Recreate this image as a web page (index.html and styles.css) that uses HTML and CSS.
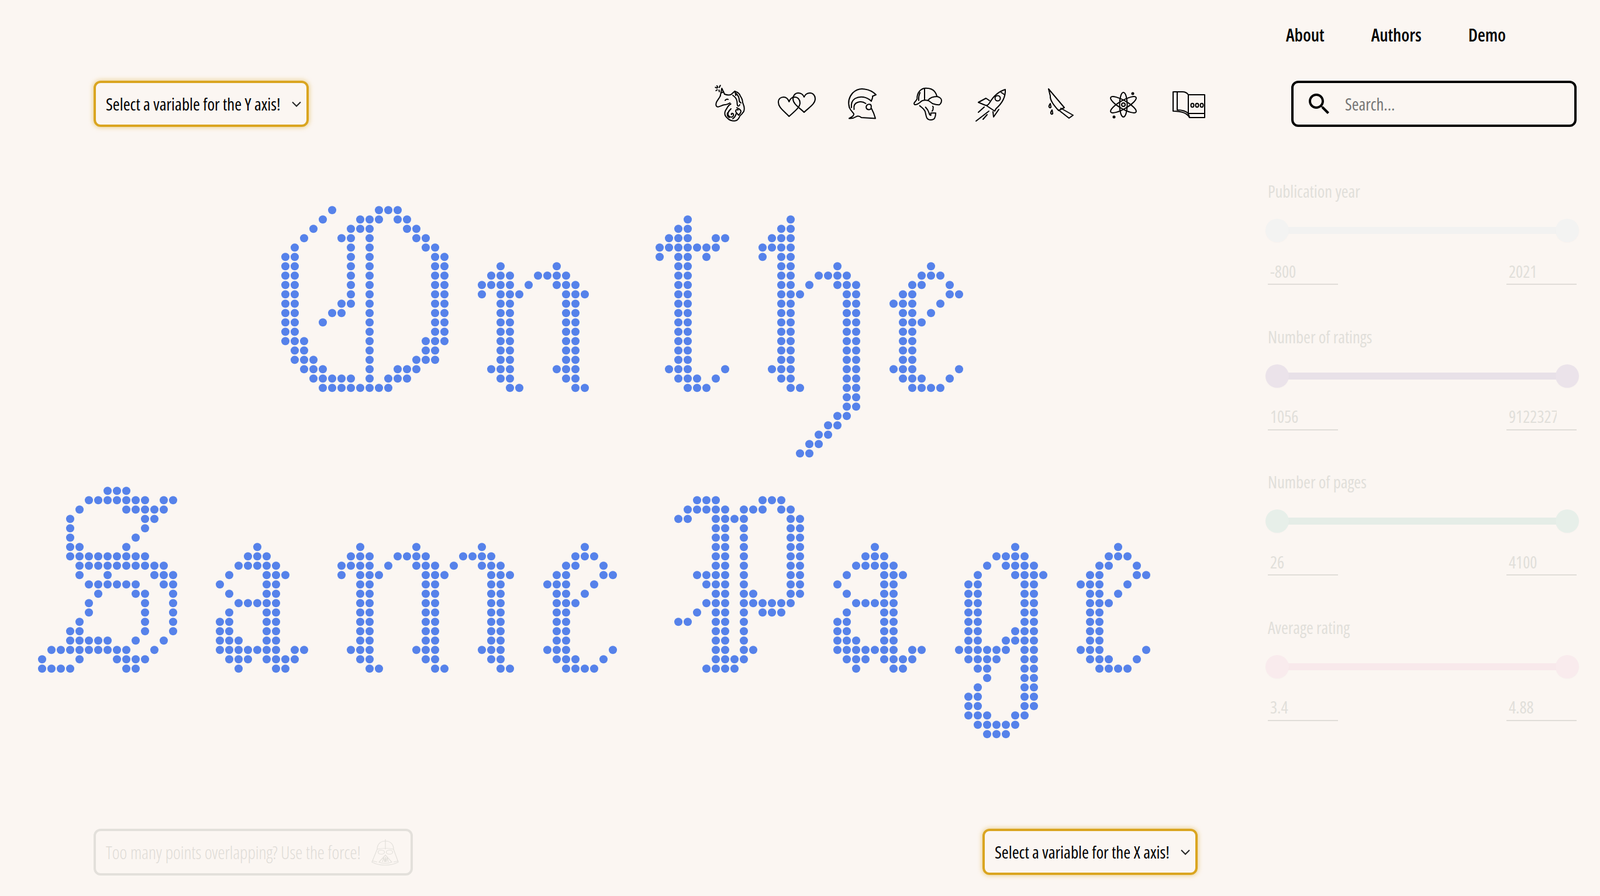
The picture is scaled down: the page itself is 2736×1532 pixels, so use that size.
FILE: index.html
```html
<!DOCTYPE html>
<html lang="en">
<head>
    <meta charset="UTF-8">
    <meta name="viewport" content="width=device-width, initial-scale=1.0">
    <title>On the Same Page</title>
    <link rel="stylesheet" href="styles.css">
</head>
<body>
    <nav class="topnav">
        <a href="#about">About</a>
        <a href="#authors">Authors</a>
        <a href="#demo">Demo</a>
    </nav>

    <div class="layout">
        <main class="main">
            <div class="toolbar">
                <div class="axis-select">
                    <select><option>Select a variable for the Y axis!</option></select>
                    <svg class="chevron" viewBox="0 0 16 10"><path d="M1 1.500l7 7 7-7"/></svg>
                </div>

                <!-- genre icons -->
                <div class="genres">
                    <!-- fantasy -->
                    <svg class="genre" viewBox="0 0 64 64">
                        <path d="M14.700 18L17.300 5 22 15M15.500 13l5-2M6.300 3.300L9 4.500M14.700 0L13 3.500M9 .7l1.500 2.800M7.300 9l2.200-1.500M13 10.700L12.500 8"/>
                        <path d="M14.700 18c-2 5-6 8-7 12-1 4 0 7 3 6.700 4-.3 7-3 10.500-3.400 4-.4 7-1 10-3.300M23 25.700c1.500-2 3.500-2.500 5-1.700M22 15c4 1.500 8 2 11 .7l6.700-6 1.600 7.600"/>
                        <path d="M40.700 10.700c4 1 7 4 8 7 2 3 4 6 4 9.600 0 4 3 6 3 12 0 5-1 6-3 8-1 3-4 3-5 6-2 5-5 7.400-9 7.400-4 0-8-1-11-4-4-3-6-7-5-11 0-3 3-5 4-8 1-2 3-4 6-6"/>
                        <path d="M36 17c3 2 6 5 7 9 1 3 0 5 1 8 1 2 3 2 4-1M42 14c3 3 5 7 5 11 0 3 1 4 3 5M43 38c2 2 6 2 7 6 0 3-2 5-4 7-2-3-5-4-5-7 0-3 3-3 4-2M33 40c-3 3-6 6-5 10 1 3 4 5 7 4 3-1 3-5 1-6-2-1-3 1-2 2M42 48c-1 4-3 7-6 9M27 47c-1 3 0 6 3 8"/>
                    </svg>
                    <!-- romance -->
                    <svg class="genre" viewBox="0 0 64 64">
                        <path d="M20.300 53C12 44 2 38 2 29c0-6 4-9 9-9 4 0 7.500 3 9.300 8 1.700-5 5.200-8 9.700-8 5 0 9 4 9 10 0 8-10 15-18.700 23z"/>
                        <path d="M46 46c-8-8-19-14-19-23 0-6 4-10 9-10 4 0 8 2 10 7 2-5 6-7 10-7 5 0 9 4 9 10 0 9-11 15-19 23z"/>
                    </svg>
                    <!-- history -->
                    <svg class="genre" viewBox="0 0 64 64">
                        <path d="M11.500 38C9 30 10 21 17 13c6-6 14-8 21-6.500 8 1 14 4.500 19 9.500l-6 2.500c1 2-1 5-2 8"/>
                        <path d="M15 38c-1-7 1-12 6-15.500 9-5 20-3 28 4.500M19.500 41c-1-6 0-10 6-12 5-2 10-1 14 2"/>
                        <path d="M11.500 38c1.500 4 5 7 7.500 10.500 1 3-4 6-8 8 5 .5 9-1 12-3 3-2 6-1 9 1.500l24 1.500c-2-7-4-12-7-17.500-2 3.500-7 3-8.500 0-1.500-4 2-8 6.500-6.500 2 1 2 4 1.500 6"/>
                    </svg>
                    <!-- mystery -->
                    <svg class="genre" viewBox="0 0 64 64">
                        <path d="M15.300 22.300C15 12 22 4.700 30.300 4.700c6 0 12 2 15 6 2 2.500 3 5 4 8.300 4 1 7.700 3.700 7.700 6.700 0 4-2.500 7.600-5 7.600-4 0-7-1-10-2-3-2-5-4-8.300-5.600-5-1-10.500 0-13.400 3.300-3 2.500-6 4.300-9 4-2-1-1.500-3 .5-5 1-1.500 2.500-3 3.500-4.700"/>
                        <path d="M28 5.700v19M20.300 12.300c-2 4-2.500 9-2.300 13.400M49.300 19c-6 0-12 2-15.600 6.700"/>
                        <path d="M19.700 34.700c3 3 7 5 9 9.300 1.500 4 1.300 8 3.300 11.700 1.500 2.500 4 3.300 6.700 3.300 3 0 5.500-1.300 6.600-3.300 1.200-2 1.700-5 1.700-8.400h-8.300v4c-1.500 0-2.500-2-3-4-1-3.500-3-7-6-10M42 35.700c2 2 0 4 .5 5 .5 1.300-1 2-1.500 3.300"/>
                    </svg>
                    <!-- science fiction -->
                    <svg class="genre" viewBox="0 0 64 64">
                        <path d="M54 7C44 10 34 18 27 30c-2 3-4 5-6 4l15 10 2-4c9-8 17-19 16-33z"/>
                        <circle cx="41" cy="22" r="4.500"/>
                        <path d="M47 12l6 4M27 26l-6-4-13 7 12 5M43 41l-9 13-1-9M4 61l22-17M8 46l10-9M16 58l7-8"/>
                    </svg>
                    <!-- crime -->
                    <svg class="genre" viewBox="0 0 64 64">
                        <path d="M16 6l27 32-10 5C27 36 18 26 19 18zM37 39l21 12-7 5-18-14"/>
                        <path d="M19 31c-2 3-3 4-2 6s4 1 3-1zM22 42c-2 3-3 4-2 6s4 1 3-1z"/>
                    </svg>
                    <!-- science -->
                    <svg class="genre" viewBox="0 0 64 64">
                        <ellipse cx="32" cy="33" rx="6.500" ry="21"/>
                        <ellipse cx="32" cy="33" rx="7" ry="25" transform="rotate(60 32 33)"/>
                        <ellipse cx="32" cy="33" rx="7" ry="25" transform="rotate(-60 32 33)"/>
                        <circle cx="32" cy="33" r="3"/>
                        <circle class="solid" cx="48" cy="14" r="1.500"/>
                        <circle class="solid" cx="16" cy="54" r="1.500"/>
                    </svg>
                    <!-- other -->
                    <svg class="genre" viewBox="0 0 64 64">
                        <path d="M31 16h28v39H33M31 48h28M31 16c-2-3-6-5-10-5H5v33c10 0 23 1 28 11 0-3-2-5-2-7z"/>
                        <path d="M12 11v31c8 0 15 2 19 6"/>
                        <ellipse cx="38" cy="34" rx="2.500" ry="3.200"/>
                        <ellipse cx="46" cy="34" rx="2.500" ry="3.200"/>
                        <ellipse cx="54" cy="34" rx="2.500" ry="3.200"/>
                    </svg>
                </div>
            </div>

            <!-- the dots get drawn in here by plot.js -->
            <div class="plot">
                <svg id="dots" class="dots" role="img" aria-label="On the Same Page"></svg>
            </div>

            <div class="bottombar">
                <div class="force">
                    <span>Too many points overlapping? Use the force!</span>
                    <svg class="vader" viewBox="0 0 48 48">
                        <path d="M11 19C11 10 17 5 25 5s14 5 14 14M25 2v17M11 19c8-2 20-2 28 0M11 19L2 41c13 7 32 7 45 0L39 19"/>
                        <ellipse cx="18" cy="24" rx="5.500" ry="3.500"/>
                        <ellipse cx="32" cy="24" rx="5.500" ry="3.500"/>
                        <path d="M25 29L14 41c6 3 15 3 22 0zM20 41l2-8 2 8 1-9 1 9 2-8 2 8M3 39l8 2M47 39l-8 2"/>
                    </svg>
                </div>
                <div class="axis-select">
                    <select><option>Select a variable for the X axis!</option></select>
                    <svg class="chevron" viewBox="0 0 16 10"><path d="M1 1.500l7 7 7-7"/></svg>
                </div>
            </div>
        </main>

        <aside class="side">
            <div class="search">
                <svg class="search-icon" viewBox="0 0 24 24"><path d="M15.500 14h-.79l-.28-.27C15.410 12.590 16 11.110 16 9.500 16 5.910 13.090 3 9.500 3S3 5.910 3 9.500 5.910 16 9.500 16c1.610 0 3.090-.59 4.230-1.570l.27.28v.79l5 4.990L20.490 19l-4.990-5zm-6 0C7.010 14 5 11.990 5 9.500S7.010 5 9.500 5 14 7.010 14 9.500 11.990 14 9.500 14z"/></svg>
                <input type="text" placeholder="Search...">
            </div>

            <div class="filter year">
                <div class="filter-label">Publication year</div>
                <div class="range"><span class="thumb"></span><span class="thumb"></span></div>
                <div class="values"><input value="-800"><input value="2021"></div>
            </div>
            <div class="filter ratings">
                <div class="filter-label">Number of ratings</div>
                <div class="range"><span class="thumb"></span><span class="thumb"></span></div>
                <div class="values"><input value="1056"><input value="9122327"></div>
            </div>
            <div class="filter pages">
                <div class="filter-label">Number of pages</div>
                <div class="range"><span class="thumb"></span><span class="thumb"></span></div>
                <div class="values"><input value="26"><input value="4100"></div>
            </div>
            <div class="filter rating">
                <div class="filter-label">Average rating</div>
                <div class="range"><span class="thumb"></span><span class="thumb"></span></div>
                <div class="values"><input value="3.4"><input value="4.88"></div>
            </div>
        </aside>
    </div>

    <script src="plot.js"></script>
</body>
</html>
```

FILE: styles.css
```css
* {
    margin: 0;
    padding: 0;
    box-sizing: border-box;
}

body {
    font-family: "Open Sans", "Liberation Sans", sans-serif;
    font-stretch: 75%;
    background-color: #fbf6f2;
    height: 1532px;
    overflow: hidden;
}

/* top links */
.topnav {
    display: flex;
    justify-content: flex-end;
    align-items: center;
    height: 120px;
    padding: 0 121px 2px 0;
}

.topnav a {
    padding: 0 40px;
    font-size: 30px;
    font-weight: 600;
    color: #000;
    text-decoration: none;
}

.layout {
    display: flex;
}

.main {
    width: 2136px;
    padding-top: 18px;
}

.toolbar {
    display: flex;
    justify-content: space-between;
    align-items: center;
    height: 79px;
    padding: 0 71px 0 160px;
}

.axis-select {
    position: relative;
    width: 368px;
    height: 79px;
}

.axis-select select {
    appearance: none;
    width: 100%;
    height: 100%;
    padding-left: 17px;
    font-family: inherit;
    font-stretch: inherit;
    font-size: 28.800px;
    color: #000;
    background: transparent;
    border: 4px solid #daa520;
    border-radius: 12px;
    box-shadow: 0 0 8px rgba(218, 165, 32, 0.6);
}

.chevron {
    position: absolute;
    top: 35px;
    right: 13px;
    width: 16px;
    height: 10px;
    fill: none;
    stroke: #222;
    stroke-width: 2;
}

.genres {
    display: flex;
    gap: 48px;
}

.genre {
    width: 64px;
    height: 64px;
    fill: none;
    stroke: #000;
    stroke-width: 2;
    stroke-linejoin: round;
    stroke-linecap: round;
    overflow: visible;
}

.genre .solid {
    fill: #000;
}

.plot {
    position: relative;
    height: 1200px;
}

.dots {
    position: absolute;
    top: 0;
    left: 0;
    width: 100%;
    height: 100%;
    overflow: visible;
}

.dots circle {
    fill: #5682ea;
}

.bottombar {
    display: flex;
    justify-content: space-between;
    padding: 0 88px 0 160px;
}

.force {
    display: flex;
    align-items: center;
    justify-content: space-between;
    width: 546px;
    height: 80px;
    padding: 0 20px 0 17px;
    border: 4px solid #e3e0db;
    border-radius: 12px;
    font-size: 30.400px;
    font-weight: 300;
    color: #dfdcd7;
}

.vader {
    width: 48px;
    height: 48px;
    fill: none;
    stroke: #e3e0db;
    stroke-width: 1.200;
}

/* right column */
.side {
    width: 600px;
    padding-top: 18px;
}

.search {
    display: flex;
    align-items: center;
    width: 488px;
    height: 79px;
    margin: 0 0 83px 72px;
    padding-left: 20px;
    border: 4px solid #000;
    border-radius: 12px;
}

.search-icon {
    width: 48px;
    height: 48px;
    flex-shrink: 0;
}

.search input {
    flex: 1;
    min-width: 0;
    margin-left: 20px;
    font-family: inherit;
    font-stretch: inherit;
    font-size: 28.500px;
    background: transparent;
    border: none;
    outline: none;
}

.search input::placeholder {
    color: #757575;
}

.filter {
    width: 536px;
    height: 187px;
    margin: 0 0 61.500px 28px;
}

.filter-label {
    margin-left: 4px;
    font-size: 28.500px;
    line-height: 54px;
    color: #e1dfda;
}

.range {
    position: relative;
    display: flex;
    justify-content: space-between;
    height: 40px;
    margin-top: 20px;
}

.range::before {
    content: "";
    position: absolute;
    top: 14px;
    left: 20px;
    right: 20px;
    height: 12px;
    background-color: var(--track);
}

.thumb {
    position: relative;
    width: 40px;
    height: 40px;
    border-radius: 50%;
    background-color: var(--thumb);
    box-shadow: 0 1px 2px rgba(0, 0, 0, 0.02);
}

.year {
    --track: #f2f2f1;
    --thumb: #f3f3f2;
}

.ratings {
    --track: #e8e1e8;
    --thumb: #ebe3ea;
}

.pages {
    --track: #e5ede7;
    --thumb: #e7efe9;
}

.rating {
    --track: #f8e9eb;
    --thumb: #f9ebed;
}

.values {
    display: flex;
    justify-content: space-between;
    margin-top: 25px;
    padding: 0 4px;
}

.values input {
    width: 120px;
    height: 48px;
    padding: 3px 34px 0 4px;
    font-family: inherit;
    font-stretch: inherit;
    font-size: 28.500px;
    color: #e1dfda;
    background: transparent;
    border: none;
    border-bottom: 2px solid #e0ddd8;
}
```

FILE: plot.js
```js
// every glyph is a small bitmap, one dot per "#"
const GRID = 16;
const LEFT = 72;
const TOP = 142.3; // first row, measured from the top of the plot

const O = [
    ".....#....###.....",
    "....#...###.##....",
    "...#...###...##...",
    "..#...##.#....##..",
    ".#.....#.#.....##.",
    "##.....#.#......##",
    "##.....#.#......##",
    "##.....#.#......##",
    "##.....#.#......##",
    "##.....#.#......##",
    "##....##.#......##",
    "##...##..#......##",
    "##..#....#......##",
    "##.......#......##",
    "###......#.....###",
    ".##......#.....##.",
    ".###.....#....###.",
    "..###....#..###...",
    "...#####.#.###....",
    "....########......"
];

const n = [
    "..#.....#...",
    ".###..####..",
    "####.#..###.",
    "#.###....###",
    "..##.....##.",
    "..##.....##.",
    "..##.....##.",
    "..##.....##.",
    "..##.....##.",
    "..##.....##.",
    "..##.....##.",
    ".###....###.",
    "..##.....##.",
    "...##.....##"
];

const t = [
    "...#....",
    "..##....",
    ".###..##",
    "#######.",
    "#.##.#..",
    "..##....",
    "..##....",
    "..##....",
    "..##....",
    "..##....",
    "..##....",
    "..##....",
    "..##....",
    "..##....",
    "..##....",
    "..##....",
    ".###...#",
    "..###.#.",
    "...###.."
];

const h = [
    "...#.......",
    "..##.......",
    ".###.......",
    "####.......",
    "#.##.......",
    "..##....#..",
    "..##..####.",
    "..##.#..###",
    "..###....##",
    "..##.....##",
    "..##.....##",
    "..##.....##",
    "..##.....##",
    "..##.....##",
    "..##.....##",
    "..##.....##",
    ".###.....##",
    "..##.....##",
    "...##....##",
    ".........##",
    ".........##",
    "........##.",
    ".......##..",
    "......##...",
    ".....##....",
    "....##....."
];

const e = [
    "....#...",
    "...###..",
    "..##..#.",
    ".##...##",
    "###..#..",
    ".##.#...",
    ".###....",
    ".##.....",
    ".##.....",
    ".##.....",
    ".##.....",
    "###....#",
    ".###..#.",
    "..####.."
];

const S = [
    ".......###.....",
    ".....#######.##",
    "....#....#####.",
    "...#.......##..",
    "...#.......#...",
    "...#......#....",
    "...##....#.....",
    "...#########...",
    "....##########.",
    "....#..#....###",
    ".....######..##",
    "......#...##..#",
    ".....#.....#..#",
    ".....#.....#..#",
    "....#......#..#",
    "...##......#..#",
    "...#####..#..#.",
    ".#########..#..",
    "#...#...####...",
    "####.....##...."
];

const a = [
    "....#.....",
    "...###....",
    "..#####...",
    ".#...###..",
    "#....##...",
    ".#...##...",
    "..#####...",
    ".#...##...",
    "##...##...",
    "##...##...",
    "###..##...",
    "#######.##",
    ".###.####.",
    "..#...##.."
];

const m = [
    "..#.....#......#...",
    ".###..####...####..",
    "####.#..###.#..###.",
    "#.###....###....###",
    "..##.....##.....##.",
    "..##.....##.....##.",
    "..##.....##.....##.",
    "..##.....##.....##.",
    "..##.....##.....##.",
    "..##.....##.....##.",
    "..##.....##.....##.",
    ".###....###....###.",
    "..##.....##.....##.",
    "...##.....##.....##"
];

const P = [
    "..###....###..",
    ".#####.###.##.",
    "##..####....##",
    "....##.#....##",
    "....##.#....##",
    "....##.#....##",
    "....##.#....##",
    "....##.#....##",
    "..####.#....##",
    "...###.#....##",
    "....##.##...##",
    "...###.######.",
    "..#.##.#.###..",
    "##..##.#......",
    "....##.#......",
    "....##.#......",
    "....##.##.....",
    "....####......",
    "...####......."
];

const g = [
    "......#...",
    "....####..",
    "...#.####.",
    "..#...####",
    ".##....##.",
    ".##....##.",
    ".##....##.",
    ".##....##.",
    ".##....##.",
    ".##...###.",
    ".##..####.",
    "######.##.",
    ".####..##.",
    "..##...##.",
    "...#...##.",
    "..#....##.",
    ".##....##.",
    ".##....##.",
    ".###..##..",
    "..#####...",
    "...###...."
];

// glyph, column, row
const letters = [
    [O, 26, 0], [n, 47, 6],
    [t, 66, 1], [h, 77, 1], [e, 91, 6],
    [S, 0, 30], [a, 19, 36],
    [m, 32, 36], [e, 54, 36],
    [P, 68, 31], [a, 85, 36], [g, 98, 36], [e, 111, 36]
];

const svg = document.getElementById("dots");

letters.forEach(function (letter) {
    letter[0].forEach(function (line, y) {
        for (let x = 0; x < line.length; x++) {
            if (line[x] !== "#") continue;
            const dot = document.createElementNS("http://www.w3.org/2000/svg", "circle");
            dot.setAttribute("cx", LEFT + (letter[1] + x) * GRID);
            dot.setAttribute("cy", TOP + (letter[2] + y) * GRID);
            dot.setAttribute("r", 7);
            svg.appendChild(dot);
        }
    });
});
```
